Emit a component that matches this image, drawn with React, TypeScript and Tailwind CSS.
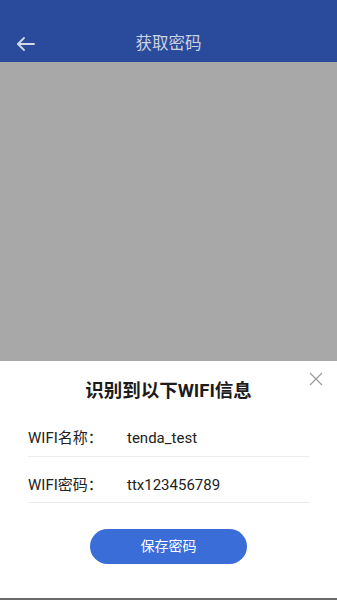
const CJK = "font-['Roboto','Noto_Sans_CJK_SC',sans-serif]";

export default function App() {
  return (
    <div className={`flex h-[600px] w-[337px] flex-col overflow-hidden bg-white ${CJK}`}>
      {/* Header */}
      <div className="relative flex h-[62px] shrink-0 items-end justify-center bg-[#2a4b9b] pb-[8px]">
        <svg
          className="absolute left-[16px] top-[36px]"
          width="19"
          height="16"
          viewBox="0 0 19 16"
          fill="none"
          stroke="#d4d8e6"
          strokeWidth="1.8"
          strokeLinecap="round"
          strokeLinejoin="round"
        >
          <path d="M18 8H2" />
          <path d="M8 2L2 8l6 6" />
        </svg>
        <span className="text-[16.5px] leading-[20px] text-[#cdd2e2]">获取密码</span>
      </div>

      {/* Scan area */}
      <div className="h-[299px] shrink-0 bg-[#a8a8a8]" />

      {/* Result sheet */}
      <div className="relative flex flex-1 flex-col bg-white">
        <button className="absolute right-[14px] top-[11px]">
          <svg width="14" height="14" viewBox="0 0 14 14" stroke="#9a9a9a" strokeWidth="1.2">
            <path d="M1 1l12 12M13 1L1 13" />
          </svg>
        </button>
        <h2 className="mt-[19px] text-center text-[18.5px] font-bold leading-[22px] text-[#1c1c1c]">
          识别到以下WIFI信息
        </h2>
        <div className="mt-[19px] px-[28px]">
          <div className="flex h-[36px] items-center border-b border-[#ececec] text-[15px] text-[#222]">
            <span className="w-[99px]">WIFI名称：</span>
            <span>tenda_test</span>
          </div>
          <div className="flex h-[46px] items-center border-b border-[#ececec] pt-[12px] text-[15px] text-[#222]">
            <span className="w-[99px]">WIFI密码：</span>
            <span>ttx123456789</span>
          </div>
        </div>
        <div className="mt-[26px] flex justify-center">
          <button className="h-[35px] w-[157px] rounded-full bg-[#3a6dd8] text-[14px] text-white">
            保存密码
          </button>
        </div>
        <div className="mt-auto h-[2px] bg-[#6b6b6b]" />
      </div>
    </div>
  );
}
